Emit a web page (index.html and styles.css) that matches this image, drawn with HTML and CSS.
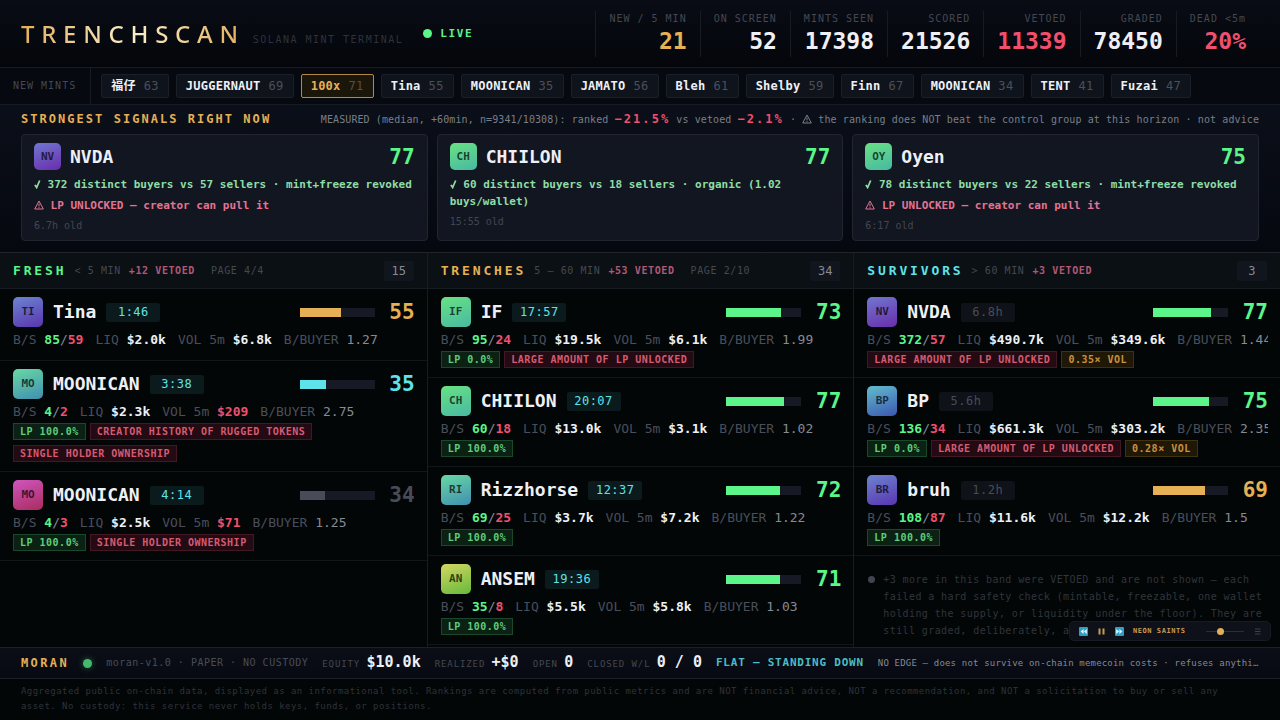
FILE: index.html
```html
<!DOCTYPE html>
<html lang="en">
<head>
<meta charset="utf-8">
<title>TRENCHSCAN</title>
<link rel="stylesheet" href="styles.css">
</head>
<body>
<header class="top">
  <h1 class="logo">TRENCHSCAN</h1>
  <span class="tagline">SOLANA MINT TERMINAL</span>
  <span class="live"><i class="dot"></i>LIVE</span>
  <dl class="stats">
    <div class="stat"><dt>NEW / 5 MIN</dt><dd class="amber">21</dd></div>
    <div class="stat"><dt>ON SCREEN</dt><dd>52</dd></div>
    <div class="stat"><dt>MINTS SEEN</dt><dd>17398</dd></div>
    <div class="stat"><dt>SCORED</dt><dd>21526</dd></div>
    <div class="stat"><dt>VETOED</dt><dd class="red">11339</dd></div>
    <div class="stat"><dt>GRADED</dt><dd>78450</dd></div>
    <div class="stat"><dt>DEAD &lt;5m</dt><dd class="red">20%</dd></div>
  </dl>
</header>

<section class="ticker">
  <h2 class="ticker-label">NEW MINTS</h2>
  <ul class="chips">
    <li class="chip"><b>福仔</b><span>63</span></li>
    <li class="chip"><b>JUGGERNAUT</b><span>69</span></li>
    <li class="chip hot"><b>100x</b><span>71</span></li>
    <li class="chip"><b>Tina</b><span>55</span></li>
    <li class="chip"><b>MOONICAN</b><span>35</span></li>
    <li class="chip"><b>JAMATO</b><span>56</span></li>
    <li class="chip"><b>Bleh</b><span>61</span></li>
    <li class="chip"><b>Shelby</b><span>59</span></li>
    <li class="chip"><b>Finn</b><span>67</span></li>
    <li class="chip"><b>MOONICAN</b><span>34</span></li>
    <li class="chip"><b>TENT</b><span>41</span></li>
    <li class="chip"><b>Fuzai</b><span>47</span></li>
  </ul>
</section>

<section class="signals">
  <div class="signals-head">
    <h2>STRONGEST SIGNALS RIGHT NOW</h2>
    <p>MEASURED (median, +60min, n=9341/10308): ranked <b>−21.5%</b> vs vetoed <b>−2.1%</b> · <svg class="warn" viewBox="0 0 10 10"><path d="M5 1 9.3 9H.7zM5 3.6v2.8M5 7.2v1"/></svg> the ranking does NOT beat the control group at this horizon · not advice</p>
  </div>
  <div class="cards">
    <article class="card">
      <div class="card-head"><span class="avatar violet">NV</span><h3>NVDA</h3><span class="score green">77</span></div>
      <p class="good"><svg class="tick" viewBox="0 0 8 10"><path d="M1 6 3 9 6.5 1"/></svg> 372 distinct buyers vs 57 sellers · mint+freeze revoked</p>
      <p class="bad"><svg class="warn" viewBox="0 0 10 10"><path d="M5 1 9.3 9H.7zM5 3.6v2.8M5 7.2v1"/></svg> LP UNLOCKED — creator can pull it</p>
      <p class="old">6.7h old</p>
    </article>
    <article class="card">
      <div class="card-head"><span class="avatar mint">CH</span><h3>CHIILON</h3><span class="score green">77</span></div>
      <p class="good"><svg class="tick" viewBox="0 0 8 10"><path d="M1 6 3 9 6.5 1"/></svg> 60 distinct buyers vs 18 sellers · organic (1.02 buys/wallet)</p>
      <p class="old">15:55 old</p>
    </article>
    <article class="card">
      <div class="card-head"><span class="avatar mint">OY</span><h3>Oyen</h3><span class="score green">75</span></div>
      <p class="good"><svg class="tick" viewBox="0 0 8 10"><path d="M1 6 3 9 6.5 1"/></svg> 78 distinct buyers vs 22 sellers · mint+freeze revoked</p>
      <p class="bad"><svg class="warn" viewBox="0 0 10 10"><path d="M5 1 9.3 9H.7zM5 3.6v2.8M5 7.2v1"/></svg> LP UNLOCKED — creator can pull it</p>
      <p class="old">6:17 old</p>
    </article>
  </div>
</section>

<main class="board">
  <section class="col">
    <div class="col-head"><h2 class="green">FRESH</h2><span>&lt; 5 MIN</span><span class="vetoed">+12 VETOED</span><span class="page">PAGE 4/4</span><span class="count">15</span></div>
    <article class="row">
      <div class="row-head"><span class="avatar indigo">TI</span><h3>Tina</h3><span class="age">1:46</span><span class="bar amber"><i style="width:55%"></i></span><span class="score amber">55</span></div>
      <p class="metrics"><span>B/S <b class="green">85</b><em>/</em><b class="red">59</b></span><span>LIQ <b>$2.0k</b></span><span>VOL 5m <b>$6.8k</b></span><span>B/BUYER <em>1.27</em></span></p>
      <div class="tags"></div>
    </article>
    <article class="row">
      <div class="row-head"><span class="avatar sea">MO</span><h3>MOONICAN</h3><span class="age">3:38</span><span class="bar cyan"><i style="width:35%"></i></span><span class="score cyan">35</span></div>
      <p class="metrics"><span>B/S <b class="green">4</b><em>/</em><b class="red">2</b></span><span>LIQ <b>$2.3k</b></span><span>VOL 5m <b class="red">$209</b></span><span>B/BUYER <em>2.75</em></span></p>
      <div class="tags"><span class="tag ok">LP 100.0%</span><span class="tag risk">CREATOR HISTORY OF RUGGED TOKENS</span><span class="tag risk">SINGLE HOLDER OWNERSHIP</span></div>
    </article>
    <article class="row">
      <div class="row-head"><span class="avatar magenta">MO</span><h3>MOONICAN</h3><span class="age">4:14</span><span class="bar grey"><i style="width:34%"></i></span><span class="score grey">34</span></div>
      <p class="metrics"><span>B/S <b class="green">4</b><em>/</em><b class="red">3</b></span><span>LIQ <b>$2.5k</b></span><span>VOL 5m <b class="red">$71</b></span><span>B/BUYER <em>1.25</em></span></p>
      <div class="tags"><span class="tag ok">LP 100.0%</span><span class="tag risk">SINGLE HOLDER OWNERSHIP</span></div>
    </article>
  </section>

  <section class="col">
    <div class="col-head"><h2 class="amber">TRENCHES</h2><span>5 – 60 MIN</span><span class="vetoed">+53 VETOED</span><span class="page">PAGE 2/10</span><span class="count">34</span></div>
    <article class="row">
      <div class="row-head"><span class="avatar mint">IF</span><h3>IF</h3><span class="age">17:57</span><span class="bar green"><i style="width:73%"></i></span><span class="score green">73</span></div>
      <p class="metrics"><span>B/S <b class="green">95</b><em>/</em><b class="red">24</b></span><span>LIQ <b>$19.5k</b></span><span>VOL 5m <b>$6.1k</b></span><span>B/BUYER <em>1.99</em></span></p>
      <div class="tags"><span class="tag ok">LP 0.0%</span><span class="tag risk">LARGE AMOUNT OF LP UNLOCKED</span></div>
    </article>
    <article class="row">
      <div class="row-head"><span class="avatar mint">CH</span><h3>CHIILON</h3><span class="age">20:07</span><span class="bar green"><i style="width:77%"></i></span><span class="score green">77</span></div>
      <p class="metrics"><span>B/S <b class="green">60</b><em>/</em><b class="red">18</b></span><span>LIQ <b>$13.0k</b></span><span>VOL 5m <b>$3.1k</b></span><span>B/BUYER <em>1.02</em></span></p>
      <div class="tags"><span class="tag ok">LP 100.0%</span></div>
    </article>
    <article class="row">
      <div class="row-head"><span class="avatar sea">RI</span><h3>Rizzhorse</h3><span class="age">12:37</span><span class="bar green"><i style="width:72%"></i></span><span class="score green">72</span></div>
      <p class="metrics"><span>B/S <b class="green">69</b><em>/</em><b class="red">25</b></span><span>LIQ <b>$3.7k</b></span><span>VOL 5m <b>$7.2k</b></span><span>B/BUYER <em>1.22</em></span></p>
      <div class="tags"><span class="tag ok">LP 100.0%</span></div>
    </article>
    <article class="row">
      <div class="row-head"><span class="avatar lime">AN</span><h3>ANSEM</h3><span class="age">19:36</span><span class="bar green"><i style="width:71%"></i></span><span class="score green">71</span></div>
      <p class="metrics"><span>B/S <b class="green">35</b><em>/</em><b class="red">8</b></span><span>LIQ <b>$5.5k</b></span><span>VOL 5m <b>$5.8k</b></span><span>B/BUYER <em>1.03</em></span></p>
      <div class="tags"><span class="tag ok">LP 100.0%</span></div>
    </article>
  </section>

  <section class="col">
    <div class="col-head"><h2 class="cyan">SURVIVORS</h2><span>&gt; 60 MIN</span><span class="vetoed">+3 VETOED</span><span class="count">3</span></div>
    <article class="row">
      <div class="row-head"><span class="avatar violet">NV</span><h3>NVDA</h3><span class="age stale">6.8h</span><span class="bar green"><i style="width:77%"></i></span><span class="score green">77</span></div>
      <p class="metrics"><span>B/S <b class="green">372</b><em>/</em><b class="red">57</b></span><span>LIQ <b>$490.7k</b></span><span>VOL 5m <b>$349.6k</b></span><span>B/BUYER <em>1.44</em></span></p>
      <div class="tags"><span class="tag risk">LARGE AMOUNT OF LP UNLOCKED</span><span class="tag vol">0.35× VOL</span></div>
    </article>
    <article class="row">
      <div class="row-head"><span class="avatar sky">BP</span><h3>BP</h3><span class="age stale">5.6h</span><span class="bar green"><i style="width:75%"></i></span><span class="score green">75</span></div>
      <p class="metrics"><span>B/S <b class="green">136</b><em>/</em><b class="red">34</b></span><span>LIQ <b>$661.3k</b></span><span>VOL 5m <b>$303.2k</b></span><span>B/BUYER <em>2.35</em></span></p>
      <div class="tags"><span class="tag ok">LP 0.0%</span><span class="tag risk">LARGE AMOUNT OF LP UNLOCKED</span><span class="tag vol">0.28× VOL</span></div>
    </article>
    <article class="row">
      <div class="row-head"><span class="avatar indigo">BR</span><h3>bruh</h3><span class="age stale">1.2h</span><span class="bar amber"><i style="width:69%"></i></span><span class="score amber">69</span></div>
      <p class="metrics"><span>B/S <b class="green">108</b><em>/</em><b class="red">87</b></span><span>LIQ <b>$11.6k</b></span><span>VOL 5m <b>$12.2k</b></span><span>B/BUYER <em>1.5</em></span></p>
      <div class="tags"><span class="tag ok">LP 100.0%</span></div>
    </article>
    <div class="note"><i class="bullet"></i><p>+3 more in this band were VETOED and are not shown — each failed a hard safety check (mintable, freezable, one wallet holding the supply, or liquidity under the floor). They are still graded, deliberately, as</p></div>
  </section>
</main>

<section class="trader">
  <h2>MORAN</h2>
  <i class="dot"></i>
  <span class="mode">moran-v1.0 · PAPER · NO CUSTODY</span>
  <span class="kv">EQUITY <b>$10.0k</b></span>
  <span class="kv">REALIZED <b>+$0</b></span>
  <span class="kv">OPEN <b>0</b></span>
  <span class="kv">CLOSED W/L <b>0 / 0</b></span>
  <span class="stance">FLAT — STANDING DOWN</span>
  <span class="why">NO EDGE — does not survive on-chain memecoin costs · refuses anything</span>
</section>

<footer class="legal">Aggregated public on-chain data, displayed as an informational tool. Rankings are computed from public metrics and are NOT financial advice, NOT a recommendation, and NOT a solicitation to buy or sell any asset. No custody: this service never holds keys, funds, or positions.</footer>

<div class="player">
  <button type="button" aria-label="Previous"><svg viewBox="0 0 9 9"><rect width="9" height="9" rx="1" fill="#2f9fc6"/><path d="M4.6 2v5L1.6 4.5zM7.8 2v5l-3-2.500z" fill="#e4f4fa"/></svg></button>
  <button type="button" aria-label="Pause"><svg viewBox="0 0 9 9"><path d="M1.500 1.500h2v6h-2zM5.500 1.500h2v6h-2z" fill="#c99b52"/></svg></button>
  <button type="button" aria-label="Next"><svg viewBox="0 0 9 9"><rect width="9" height="9" rx="1" fill="#2f9fc6"/><path d="M1.200 2v5l3-2.500zM4.400 2v5l3-2.500z" fill="#e4f4fa"/></svg></button>
  <span class="track">NEON SAINTS</span>
  <input type="range" min="0" max="100" value="37" aria-label="Volume">
  <button type="button" aria-label="Playlist"><svg viewBox="0 0 9 9"><path d="M2 2h5.500M2 4.500h5.500M2 7h5.500" stroke="#3c414d" fill="none"/></svg></button>
</div>
</body>
</html>
```

FILE: styles.css
```css
:root {
  --mono: "DejaVu Sans Mono", "Liberation Mono", "Noto Sans CJK SC", monospace;
  --line: #171c22;
  --dim: #444852;
  --faint: #31353d;
  --text: #eef0f6;
  --green: #5bf58a;
  --amber: #e6b055;
  --cyan: #5fe3ea;
  --red: #f0506e;
  --grey: #484c59;
}

* { box-sizing: border-box; margin: 0; padding: 0; }

body {
  position: relative;
  display: flex;
  flex-direction: column;
  height: 100vh;
  overflow: hidden;
  background: #020607;
  color: var(--text);
  font: 12px/16px var(--mono);
}

h1, h2, h3 { font-size: 12px; font-weight: 400; }
ul { list-style: none; }
em { font-style: normal; }
.green { color: var(--green); }
.amber { color: var(--amber); }
.cyan { color: var(--cyan); }
.red { color: var(--red); }
.grey { color: var(--grey); }

/* header */
.top {
  display: flex;
  align-items: center;
  height: 68px;
  padding: 0 21px;
  background: linear-gradient(#090c15, #04060b);
  border-bottom: 1px solid var(--line);
}
.logo {
  font: 500 24px/32px "Noto Sans", sans-serif;
  letter-spacing: .28em;
  color: transparent;
  background: linear-gradient(90deg, #e3ae5c, #fbeecb 50%, #e3ae5c);
  background-clip: text;
  -webkit-background-clip: text;
}
.tagline {
  margin: 12px 0 0 8px;
  color: #2e323b;
  font-size: 10px;
  letter-spacing: .15em;
}
.live {
  display: flex;
  align-items: center;
  gap: 8px;
  margin-left: 20px;
  color: var(--green);
  font-size: 11px;
  font-weight: 700;
  letter-spacing: .15em;
}
.dot {
  width: 9px;
  height: 9px;
  border-radius: 50%;
  background: var(--green);
}
.stats { display: flex; margin-left: auto; }
.stat {
  height: 46px;
  padding: 0 13px;
  border-left: 1px solid var(--line);
  text-align: right;
}
.stat dt {
  color: var(--dim);
  font-size: 10px;
  letter-spacing: .1em;
}
.stat dd { font-size: 23px; font-weight: 700; line-height: 28px; }

/* new mint ticker */
.ticker {
  display: flex;
  align-items: stretch;
  height: 37px;
  background: #060910;
  border-bottom: 1px solid var(--line);
}
.ticker-label {
  padding: 10px 14px 0 13px;
  border-right: 1px solid var(--line);
  color: var(--dim);
  font-size: 10px;
  letter-spacing: .1em;
}
.chips { display: flex; align-items: center; gap: 7px; padding-left: 10px; }
.chip {
  display: flex;
  gap: 8px;
  padding: 3px 9px;
  background: #0f141c;
  border: 1px solid #1a2028;
  border-radius: 2px;
}
.chip b { letter-spacing: .02em; }
.chip span { color: #4b4f5b; letter-spacing: .03em; }
.chip.hot { background: #1b160a; border-color: #b38a45; }
.chip.hot b { color: var(--amber); }
.chip.hot span { color: #5c4f35; }

/* strongest signals */
.signals {
  padding: 5px 21px 11px;
  background: linear-gradient(#0b0f19, #05080f);
  border-bottom: 1px solid #1f252b;
}
.signals-head {
  display: flex;
  justify-content: space-between;
  align-items: baseline;
  margin-bottom: 5px;
  line-height: 18px;
}
.signals-head h2 {
  color: var(--amber);
  font-weight: 700;
  letter-spacing: .17em;
}
.signals-head p { color: #7a7e88; font-size: 10px; letter-spacing: .01em; white-space: nowrap; }
.signals-head b { color: var(--red); font-size: 12px; letter-spacing: .17em; }
.warn, .tick {
  width: 10px;
  height: 10px;
  fill: none;
  stroke: currentColor;
  vertical-align: -1px;
}
.tick { width: 7px; stroke-width: 2; }
.cards { display: grid; grid-template-columns: repeat(3, 1fr); gap: 9px; }
.card {
  padding: 8px 12px 6px;
  background: #121621;
  border: 1px solid #20252f;
  border-radius: 4px;
  font-size: 11px;
  line-height: 17px;
}
.card-head {
  display: flex;
  align-items: center;
  gap: 9px;
  margin-bottom: 6px;
}
.card h3, .row h3 { font-size: 18px; font-weight: 700; line-height: 24px; }
.card .avatar { width: 27px; height: 27px; }
.good, .bad { font-weight: 700; }
.good { color: #8fdda6; }
.bad { margin-top: 4px; color: #e27492; }
.old { margin-top: 3px; color: #424651; font-size: 10px; }

.avatar {
  display: grid;
  place-items: center;
  width: 30px;
  height: 30px;
  border-radius: 5px;
  color: rgba(0, 0, 0, .7);
  font-size: 11px;
  font-weight: 700;
}
.violet { background: linear-gradient(160deg, #7077d0, #6a2dac); }
.indigo { background: linear-gradient(160deg, #6c84d0, #5a35b0); }
.mint { background: linear-gradient(160deg, #68e184, #48b9a2); }
.sea { background: linear-gradient(160deg, #68d9a4, #408fb0); }
.magenta { background: linear-gradient(160deg, #cf56bd, #aa2c60); }
.lime { background: linear-gradient(160deg, #d3d761, #66b93b); }
.sky { background: linear-gradient(160deg, #62bdce, #3c57b0); }

.score {
  min-width: 30px;
  margin-left: auto;
  font-size: 21px;
  font-weight: 700;
  line-height: 26px;
  text-align: right;
}

/* three age bands */
.board {
  flex: 1;
  display: grid;
  grid-template-columns: repeat(3, minmax(0, 1fr));
  min-height: 0;
  overflow: hidden;
}
.col + .col { border-left: 1px solid var(--line); }
.col-head {
  display: flex;
  align-items: center;
  gap: 8px;
  height: 36px;
  padding: 0 13px;
  background: #0b1014;
  border-bottom: 1px solid var(--line);
  color: var(--dim);
  font-size: 10px;
  letter-spacing: .06em;
}
.col-head h2 { font-size: 13px; font-weight: 700; letter-spacing: .22em; }
.col-head .vetoed { color: #b05874; font-weight: 700; }
.col-head .page { margin-left: 8px; }
.col-head .count {
  min-width: 30px;
  margin-left: auto;
  padding: 2px 7px;
  background: #11151d;
  border-radius: 2px;
  color: #868a95;
  font-size: 12px;
  letter-spacing: 0;
  text-align: center;
}
.row {
  padding: 8px 12px 9px 13px;
  border-bottom: 1px solid #11161a;
}
.row-head { display: flex; align-items: center; gap: 10px; }
.age {
  min-width: 54px;
  padding: 1px 6px 2px;
  background: #0b1a1c;
  border-radius: 2px;
  color: var(--cyan);
  letter-spacing: .04em;
  text-align: center;
}
.age.stale { background: #0f1218; color: #484c57; }
.bar {
  width: 75px;
  height: 9px;
  margin-left: auto;
  background: #171a25;
}
.bar i { display: block; height: 100%; background: currentColor; }
.row .score { margin-left: 0; }
.metrics {
  display: flex;
  gap: 12px;
  margin-top: 4px;
  overflow: hidden;
  color: #4a4e5a;
  font-size: 13px;
  line-height: 17px;
  white-space: nowrap;
}
.metrics b:not([class]) { color: var(--text); }
.metrics em { color: #868a95; }
.tags { display: flex; flex-wrap: wrap; gap: 5px 4px; margin-top: 3px; }
.tag {
  padding: 0 6px;
  border: 1px solid;
  font-size: 10px;
  font-weight: 700;
  line-height: 15px;
  letter-spacing: .05em;
}
.tag.ok { color: #5fcd79; background: #0a2114; border-color: #1b472a; }
.tag.risk { color: #d65a71; background: #230a13; border-color: #441823; }
.tag.vol { color: #c8903f; background: #201806; border-color: #41320f; }
.note {
  display: flex;
  gap: 8px;
  padding: 15px 13px 0 14px;
  color: var(--faint);
  font-size: 10px;
  line-height: 17px;
  letter-spacing: .04em;
}
.bullet {
  flex: none;
  width: 7px;
  height: 7px;
  margin-top: 5px;
  border-radius: 50%;
  background: #42454f;
}

/* paper trader strip */
.trader {
  display: flex;
  align-items: center;
  gap: 14px;
  height: 32px;
  padding: 0 21px;
  background: linear-gradient(#0b0e16, #070a12);
  border: solid #1c2128;
  border-width: 1px 0;
  white-space: nowrap;
}
.trader h2 { color: var(--amber); font-weight: 700; letter-spacing: .2em; }
.trader .dot { flex: none; background: #48b96c; box-shadow: 0 0 6px #25643c; }
.mode { color: #484c56; font-size: 10px; letter-spacing: .05em; }
.kv { color: var(--dim); font-size: 9px; letter-spacing: .1em; }
.kv b { color: var(--text); font-size: 15px; letter-spacing: 0; }
.stance { color: #4cbcc5; font-size: 11px; font-weight: 700; letter-spacing: .07em; }
.why {
  min-width: 0;
  overflow: hidden;
  color: #858994;
  font-size: 9px;
  letter-spacing: .02em;
  text-overflow: ellipsis;
}

.legal {
  height: 41px;
  padding: 5px 21px 0;
  color: #2f333a;
  font-size: 9px;
  line-height: 15px;
  letter-spacing: .05em;
}

/* floating music player */
.player {
  position: absolute;
  right: 9px;
  bottom: 79px;
  display: flex;
  align-items: center;
  gap: 9px;
  width: 202px;
  height: 20px;
  padding: 0 8px 0 9px;
  background: #0e1119;
  border: 1px solid #171b23;
  border-radius: 5px;
}
.player button {
  display: flex;
  width: 9px;
  height: 9px;
  background: none;
  border: 0;
}
.player svg { width: 9px; height: 9px; }
.track {
  margin-right: auto;
  color: #c99b52;
  font-size: 7px;
  font-weight: 700;
  letter-spacing: .08em;
}
.player input {
  width: 38px;
  height: 8px;
  background: linear-gradient(#2a2e37, #2a2e37) center / 100% 1px no-repeat;
  appearance: none;
}
.player input::-webkit-slider-thumb {
  width: 7px;
  height: 7px;
  background: #e3ae5c;
  border-radius: 50%;
  appearance: none;
}
```
